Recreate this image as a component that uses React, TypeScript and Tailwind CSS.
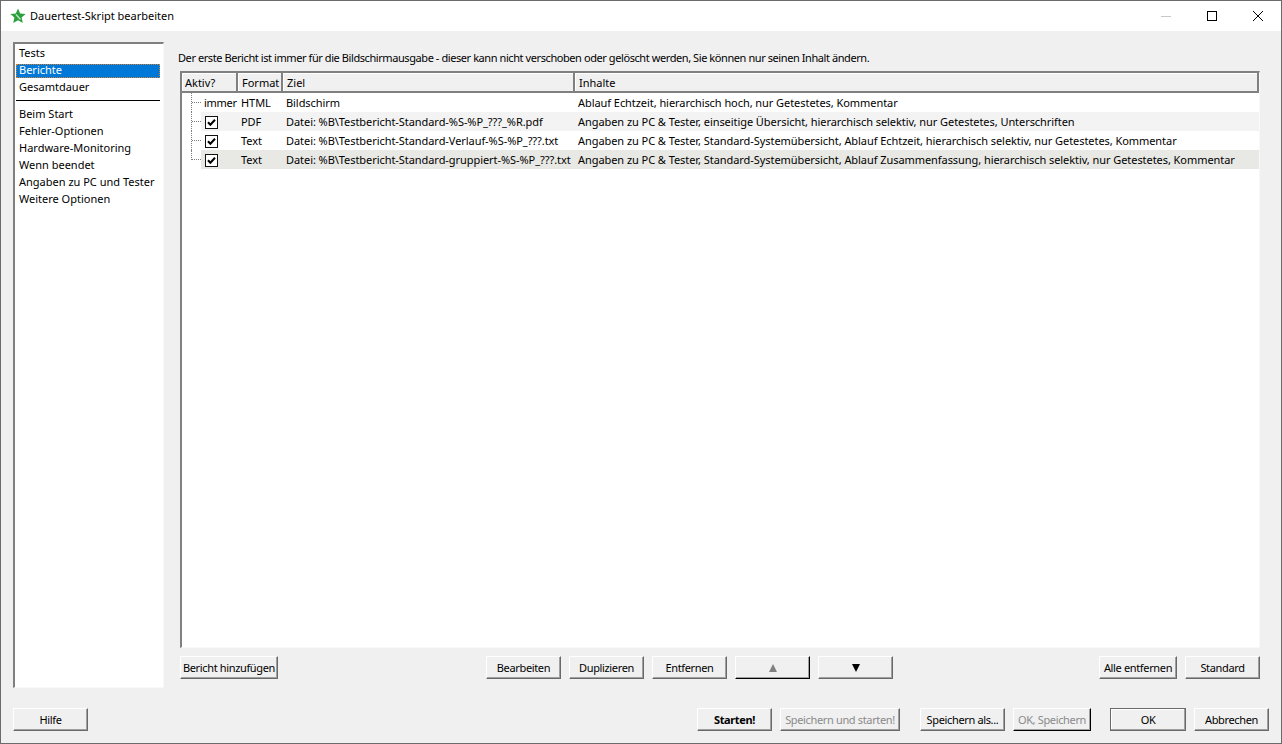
import React from 'react';

const sideTop = ['Tests', 'Berichte', 'Gesamtdauer'];
const sideBottom = ['Beim Start', 'Fehler-Optionen', 'Hardware-Monitoring', 'Wenn beendet', 'Angaben zu PC und Tester', 'Weitere Optionen'];

const rows = [
  { format: 'HTML', ziel: 'Bildschirm', inhalt: 'Ablauf Echtzeit, hierarchisch hoch, nur Getestetes, Kommentar', bg: 'bg-white', active: false },
  { format: 'PDF', ziel: 'Datei: %B\\Testbericht-Standard-%S-%P_???_%R.pdf', inhalt: 'Angaben zu PC & Tester, einseitige Übersicht, hierarchisch selektiv, nur Getestetes, Unterschriften', bg: 'bg-[#f3f3f3]', active: true },
  { format: 'Text', ziel: 'Datei: %B\\Testbericht-Standard-Verlauf-%S-%P_???.txt', inhalt: 'Angaben zu PC & Tester, Standard-Systemübersicht, Ablauf Echtzeit, hierarchisch selektiv, nur Getestetes, Kommentar', bg: 'bg-white', active: true },
  { format: 'Text', ziel: 'Datei: %B\\Testbericht-Standard-gruppiert-%S-%P_???.txt', inhalt: 'Angaben zu PC & Tester, Standard-Systemübersicht, Ablauf Zusammenfassung, hierarchisch selektiv, nur Getestetes, Kommentar', bg: 'bg-[#e8e8e4]', active: true },
];

function Btn({ w, children, disabled, dark, bold, isDefault }: { w: string; children: React.ReactNode; disabled?: boolean; dark?: boolean; bold?: boolean; isDefault?: boolean }) {
  let frame = 'border-t-white border-l-white border-r-[#696969] border-b-[#696969] shadow-[inset_-1px_-1px_0_#a0a0a0]';
  if (dark) frame = 'border-t-white border-l-white border-r-black border-b-black shadow-[inset_-1px_-1px_0_#a0a0a0]';
  if (isDefault) frame = 'border-t-[#696969] border-l-[#696969] border-r-[#696969] border-b-[#696969] shadow-[inset_-1px_-1px_0_#a0a0a0,inset_1px_1px_0_#fff]';
  return (
    <div className={`${w} h-[23px] flex items-center justify-center whitespace-nowrap tracking-[-0.35px] border bg-[#f0f0f0] ${frame} ${disabled ? 'text-[#8a8a8a]' : 'text-black'} ${bold ? 'font-bold' : ''}`}>
      {children}
    </div>
  );
}

function Check() {
  return (
    <svg width="13" height="13" viewBox="0 0 13 13" className="block mt-[1px]">
      <rect x="0.5" y="0.5" width="12" height="12" fill="#fff" stroke="#111" />
      <path d="M3 6.2 L5.4 8.8 L10 3.8" fill="none" stroke="#000" strokeWidth="2" />
    </svg>
  );
}

function Star() {
  return (
    <svg width="16" height="16" viewBox="0 0 16 16" className="block">
      <path d="M8 0.5 L10.2 5.4 L15.6 6 L11.6 9.6 L12.8 15 L8 12.2 L3.2 15 L4.4 9.6 L0.4 6 L5.8 5.4 Z" fill="#2ba03c" />
      <path d="M6 6.5 L10.5 11.5" stroke="#bfe8c8" strokeWidth="1.2" fill="none" />
    </svg>
  );
}

function Tri({ up, color }: { up?: boolean; color: string }) {
  return (
    <svg width="8" height="8" viewBox="0 0 8 8" className="block">
      <path d={up ? 'M4 0 L8 8 L0 8 Z' : 'M0 0 L8 0 L4 8 Z'} fill={color} />
    </svg>
  );
}

export default function App() {
  return (
    <div className="w-[1282px] h-[744px] flex flex-col bg-[#f0f0f0] border border-[#6b6b6b] text-[11px] leading-[13px] text-black font-['Noto_Sans',sans-serif] overflow-hidden">
      {/* title bar */}
      <div className="h-[30px] shrink-0 bg-white flex items-center pl-[9px]">
        <Star />
        <span className="ml-[4px] pb-[2px]">Dauertest-Skript bearbeiten</span>
        <div className="ml-auto flex items-center">
          <div className="w-[46px] flex justify-center"><div className="w-[10px] h-px bg-[#c8c8c8]" /></div>
          <div className="w-[46px] flex justify-center"><div className="w-[10px] h-[10px] border border-black" /></div>
          <svg width="46" height="12" viewBox="0 0 46 12" className="block">
            <path d="M18 1 L28 11 M28 1 L18 11" stroke="#000" strokeWidth="1" />
          </svg>
        </div>
      </div>

      <div className="flex-1 flex flex-col pl-[12px] pr-[12px]">
        <div className="flex h-[646px] mt-[11px]">
          {/* side list */}
          <div className="w-[151px] shrink-0 bg-white border-t-2 border-l-2 border-[#808080] border-r border-b border-r-[#f8f8f8] border-b-[#f8f8f8] pl-[1px] pr-[3px] pt-[1px]">
            {sideTop.map((s, i) => (
              <div key={s} className="h-[17px] flex items-center">
                <div className={`w-full h-[14px] pb-[2px] flex items-center pl-[3px] ${i === 1 ? 'bg-[#0078d7] text-white outline-1 -outline-offset-1 outline-dotted outline-[#d08030]' : ''}`}>{s}</div>
              </div>
            ))}
            <div className="h-px bg-black mt-[4px] mb-[5px]" />
            {sideBottom.map(s => (
              <div key={s} className="h-[17px] pb-[2px] flex items-center pl-[3px]">{s}</div>
            ))}
          </div>

          {/* right panel */}
          <div className="flex-1 flex flex-col ml-[16px] mr-[9px]">
            <div className="h-[18px] pt-[8px] flex items-center mt-[2px] mb-[9px] -ml-[2px] whitespace-nowrap tracking-[-0.42px]">Der erste Bericht ist immer für die Bildschirmausgabe - dieser kann nicht verschoben oder gelöscht werden, Sie können nur seinen Inhalt ändern.</div>
            <div className="h-[577px] flex flex-col bg-white border-t-2 border-l-2 border-[#808080] border-r border-b border-r-[#f8f8f8] border-b-[#f8f8f8]">
              <div className="flex h-[20px] shrink-0 bg-[#f0f0f0] border-b-2 border-[#808080]">
                <div className="w-[56px] pl-[3px] flex items-center border-r-2 border-[#808080] shadow-[inset_1px_1px_0_#fff]">Aktiv?</div>
                <div className="w-[45px] pl-[4px] flex items-center border-r-2 border-[#808080] shadow-[inset_1px_1px_0_#fff]">Format</div>
                <div className="w-[292px] pl-[4px] flex items-center border-r-2 border-[#808080] shadow-[inset_1px_1px_0_#fff]">Ziel</div>
                <div className="flex-1 pl-[4px] flex items-center border-r-2 border-[#808080] shadow-[inset_1px_1px_0_#fff]">Inhalte</div>
              </div>
              <div>
                {rows.map((r, i) => (
                  <div key={i} className="flex h-[19px] items-center">
                    <div className="relative w-[19px] h-full shrink-0">
                      <div className={`absolute left-[9px] top-0 w-px border-l border-dotted border-[#808080] ${i === 3 ? 'h-[10px]' : 'h-[19px]'}`} />
                      <div className="absolute left-[10px] top-[9px] w-[9px] border-t border-dotted border-[#808080]" />
                    </div>
                    <div className={`flex-1 flex h-full items-center tracking-[-0.06px] ${r.bg}`}>
                      <div className="w-[37px] shrink-0 pl-[4px]">
                        {r.active ? <Check /> : <span className="-ml-[1px] tracking-[-0.3px]">immer</span>}
                      </div>
                      <div className="w-[45px] shrink-0 pl-[3px]">{r.format}</div>
                      <div className="w-[292px] shrink-0 pl-[3px] whitespace-nowrap">{r.ziel}</div>
                      <div className="flex-1 pl-[3px] whitespace-nowrap">{r.inhalt}</div>
                    </div>
                  </div>
                ))}
              </div>
            </div>
            <div className="flex items-center mt-[8px]">
              <Btn w="w-[98px]">Bericht hinzufügen</Btn>
              <div className="flex gap-[8px] ml-[208px]">
                <Btn w="w-[75px]">Bearbeiten</Btn>
                <Btn w="w-[75px]">Duplizieren</Btn>
                <Btn w="w-[75px]">Entfernen</Btn>
                <Btn w="w-[75px]" dark disabled><Tri up color="#808080" /></Btn>
                <Btn w="w-[75px]"><Tri color="#000" /></Btn>
              </div>
              <div className="flex gap-[8px] ml-auto">
                <Btn w="w-[78px]">Alle entfernen</Btn>
                <Btn w="w-[75px]">Standard</Btn>
              </div>
            </div>
          </div>
        </div>

        {/* bottom row */}
        <div className="flex items-center mt-[20px]">
          <Btn w="w-[75px]">Hilfe</Btn>
          <div className="ml-auto flex">
            <Btn w="w-[75px]" bold>Starten!</Btn>
            <div className="ml-[8px]"><Btn w="w-[120px]" disabled>Speichern und starten!</Btn></div>
            <div className="ml-[20px]"><Btn w="w-[85px]">Speichern als...</Btn></div>
            <div className="ml-[8px]"><Btn w="w-[78px]" dark disabled>OK, Speichern</Btn></div>
            <div className="ml-[19px]"><Btn w="w-[76px]" isDefault>OK</Btn></div>
            <div className="ml-[8px]"><Btn w="w-[75px]">Abbrechen</Btn></div>
          </div>
        </div>
      </div>
    </div>
  );
}
